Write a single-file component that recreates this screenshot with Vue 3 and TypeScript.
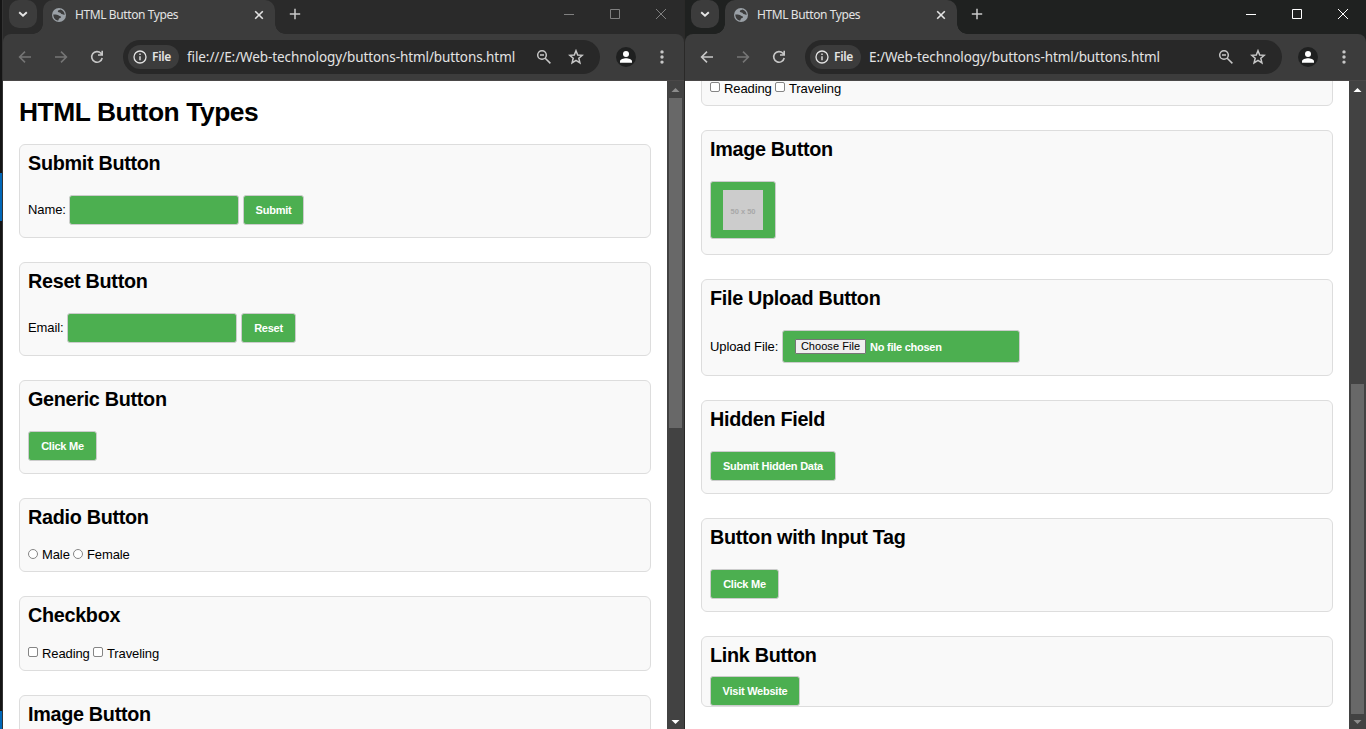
<script setup lang="ts">
interface Win {
  id: string
  url: string
  active: boolean
  scrolled: boolean
  cards: Card[]
}
interface Card {
  title: string
  kind: string
  label?: string
  button?: string
  options?: string[]
}

const checkbox: Card = { title: 'Checkbox', kind: 'checkbox', options: ['Reading', 'Traveling'] }
const image: Card = { title: 'Image Button', kind: 'image' }

const windows: Win[] = [
  {
    id: 'left',
    url: 'file:///E:/Web-technology/buttons-html/buttons.html',
    active: false,
    scrolled: false,
    cards: [
      { title: 'Submit Button', kind: 'field', label: 'Name:', button: 'Submit' },
      { title: 'Reset Button', kind: 'field', label: 'Email:', button: 'Reset' },
      { title: 'Generic Button', kind: 'button', button: 'Click Me' },
      { title: 'Radio Button', kind: 'radio', options: ['Male', 'Female'] },
      checkbox,
      image,
    ],
  },
  {
    id: 'right',
    url: 'E:/Web-technology/buttons-html/buttons.html',
    active: true,
    scrolled: true,
    cards: [
      checkbox,
      image,
      { title: 'File Upload Button', kind: 'file', label: 'Upload File:' },
      { title: 'Hidden Field', kind: 'button', button: 'Submit Hidden Data' },
      { title: 'Button with Input Tag', kind: 'button', button: 'Click Me' },
      { title: 'Link Button', kind: 'link', button: 'Visit Website' },
    ],
  },
]

const slug = (s: string) => s.split(' ')[0].toLowerCase()
</script>

<template>
  <div class="desktop">
    <div class="edge">
      <div class="edge-blue a"></div>
      <div class="edge-blue b"></div>
    </div>
    <template v-for="w in windows" :key="w.id">
      <section class="window" :class="[w.id, { active: w.active }]">
        <header class="strip">
          <div class="search-tabs">
            <svg width="28" height="28" viewBox="0 0 28 28"><path d="M10.2 12.2l3.8 3.6 3.8-3.6" fill="none" stroke="#e6e6e6" stroke-width="1.9" /></svg>
          </div>
          <div class="tab">
            <svg class="globe" width="14" height="14" viewBox="0 0 14 14">
              <circle cx="7" cy="7" r="7" fill="#9aa0a6" />
              <path d="M1.3 6.4C3 6.4 5.6 6.2 6.4 7.3c.8 1.1 1.8.8 2.4 1.2.7.6-.2 1.6-1.2 1.8-.9.2-.8 1.2-1.3 2.3C3.400 12.300 1.300 9.800 1.300 6.400z" fill="#3c3c3c" />
              <path d="M8.300 1.500C7.200 2.300 5.700 2.200 5.800 3.400c.1 1 1.600.7 2.500 1.300.8.500.8 1.500 1.900 1.500.8 0 1.300.5 2.400.8C12.700 4.200 10.900 2 8.300 1.500z" fill="#3c3c3c" />
            </svg>
            <span class="tab-title">HTML Button Types</span>
            <svg class="tab-close" width="10" height="10" viewBox="0 0 10 10"><path d="M1.200 1.200l7.600 7.600M8.800 1.200L1.200 8.800" stroke="#e3e3e3" stroke-width="1.600" /></svg>
          </div>
          <svg class="plus" width="12" height="12" viewBox="0 0 12 12"><path d="M6 .8v10.400M.8 6h10.400" stroke="#c9c9c9" stroke-width="1.500" /></svg>
          <div class="controls">
            <svg width="12" height="12" viewBox="0 0 12 12"><path d="M1 6.500h10" /></svg>
            <svg width="12" height="12" viewBox="0 0 12 12"><path d="M1.500 1.500h9v9h-9z" /></svg>
            <svg width="12" height="12" viewBox="0 0 12 12"><path d="M1 1l10 10M11 1L1 11" /></svg>
          </div>
        </header>
        <div class="toolbar">
          <svg class="nav back" width="14" height="14" viewBox="0 0 14 14"><path d="M13 7H1.800M7 1.600L1.600 7 7 12.400" /></svg>
          <svg class="nav" width="14" height="14" viewBox="0 0 14 14"><path d="M1 7h11.200M7 1.600L12.400 7 7 12.400" /></svg>
          <svg class="nav reload" width="14" height="14" viewBox="0 0 14 14"><path d="M12.200 8A5.300 5.300 0 1 1 10.900 3.300L12 4.500M12.200 .8V5H8" /></svg>
          <div class="omnibox">
            <div class="chip">
              <svg width="14" height="14" viewBox="0 0 14 14"><circle cx="7" cy="7" r="6" fill="none" stroke="#e3e3e3" stroke-width="1.300" /><path d="M7 6.200v4M7 3.600v1.500" stroke="#e3e3e3" stroke-width="1.400" /></svg>
              <span>File</span>
            </div>
            <span class="url">{{ w.url }}</span>
            <svg class="lens" width="16" height="16" viewBox="0 0 16 16"><circle cx="6" cy="6" r="4.300" /><path d="M9.200 9.200l5.200 5.200M4 6h4" /></svg>
            <svg class="star" width="16" height="16" viewBox="0 0 16 16"><path d="M8 1.700l1.700 4.300 4.600.3-3.500 3 1.100 4.500L8 11.300l-3.900 2.500 1.100-4.500-3.500-3 4.600-.3z" /></svg>
          </div>
          <svg class="avatar" width="20" height="20" viewBox="0 0 20 20"><circle cx="10" cy="10" r="10" fill="#1f2020" /><circle cx="10" cy="7" r="3" fill="#fff" /><path d="M4 15.800v-1.600c0-2 3.600-3 6-3s6 1 6 3v1.600z" fill="#fff" /></svg>
          <svg class="dots" width="4" height="14" viewBox="0 0 4 14"><circle cx="2" cy="1.900" r="1.700" /><circle cx="2" cy="7" r="1.700" /><circle cx="2" cy="12.100" r="1.700" /></svg>
        </div>
        <div class="view">
          <main class="page" :class="{ scrolled: w.scrolled }">
            <h1 v-if="!w.scrolled">HTML Button Types</h1>
            <article v-for="c in w.cards" :key="c.title" class="card" :class="c.kind">
              <h2 :class="slug(c.title)">{{ c.title }}</h2>
              <div v-if="c.kind === 'field'" class="row">
                <span class="label" :class="slug(c.button!)">{{ c.label }}</span>
                <span class="green input"></span>
                <span class="green btn" :class="slug(c.button!)">{{ c.button }}</span>
              </div>
              <div v-else-if="c.kind === 'button' || c.kind === 'link'" class="row">
                <span class="green btn" :class="slug(c.button!)">{{ c.button }}</span>
              </div>
              <div v-else-if="c.kind === 'image'" class="row">
                <span class="green picture"><span class="thumb">50 x 50</span></span>
              </div>
              <div v-else-if="c.kind === 'file'" class="row">
                <span class="label upload">{{ c.label }}</span>
                <span class="green file-input"><span class="choose">Choose File</span><span>No file chosen</span></span>
              </div>
              <div v-else class="row options">
                <template v-for="o in c.options" :key="o">
                  <span class="mark"></span>
                  <span class="option" :class="slug(o)">{{ o }}</span>
                </template>
              </div>
            </article>
          </main>
          <aside class="scrollbar">
            <svg width="17" height="17" viewBox="0 0 17 17"><path d="M8.500 7l4 4h-8z" :fill="w.scrolled ? '#fff' : '#8c8c8c'" /></svg>
            <div class="track"><div class="thumb-bar"></div></div>
            <svg width="17" height="15" viewBox="0 0 17 15"><path d="M4.500 6h8l-4 4z" :fill="w.scrolled ? '#8c8c8c' : '#fff'" /></svg>
          </aside>
        </div>
      </section>
      <div v-if="w.id === 'left'" class="seam"></div>
    </template>
  </div>
</template>

<style>
html, body { margin: 0; overflow: hidden; }
</style>

<style scoped>
* { box-sizing: border-box; }
svg { display: block; flex: none; }
.desktop { display: flex; width: 1366px; height: 729px; overflow: hidden; background: #fff; font-family: "Liberation Sans", Arial, sans-serif; }
.edge { width: 3px; height: 729px; background: #151515; border-right: 1px solid #333; flex: none; display: flex; flex-direction: column; }
.edge-blue { width: 2px; background: #0067b8; }
.edge-blue.a { margin-top: 173px; height: 48px; }
.edge-blue.b { margin-top: 490px; height: 18px; }
.window { width: 681px; height: 729px; display: flex; flex-direction: column; flex: none; background: #2a2a2a; }
.window.active { background: #1f2120; }
.seam { width: 1px; height: 729px; background: #2a2928; flex: none; }

.strip { height: 34px; display: flex; align-items: flex-start; flex: none; }
.search-tabs { width: 28px; height: 28px; margin-left: 6px; border-radius: 10px; background: #3c3c3c; }
.tab { position: relative; width: 232px; height: 34px; margin-left: 6px; padding: 0 11px 5px 9px; display: flex; align-items: center; background: #3c3c3c; border-radius: 10px 10px 0 0; }
.tab::before, .tab::after { content: ""; position: absolute; bottom: 0; width: 10px; height: 10px; }
.tab::before { left: -10px; background: radial-gradient(circle at 0 0, transparent 9.5px, #3c3c3c 10px); }
.tab::after { right: -10px; background: radial-gradient(circle at 100% 0, transparent 9.5px, #3c3c3c 10px); }
.tab-title { margin-left: 9px; font: 12px "Noto Sans", "Open Sans", sans-serif; letter-spacing: -0.4px; color: #e3e3e3; white-space: nowrap; flex: 1; }
.plus { margin: 8px 0 0 14px; }
.controls { display: flex; gap: 34px; margin: 8px 17px 0 auto; }
.controls path { fill: none; stroke: #808080; stroke-width: 1; }
.active .controls path { stroke: #fff; }

.toolbar { height: 47px; display: flex; align-items: center; flex: none; padding: 0 0 1px 15px; background: #3c3c3c; border-bottom: 1px solid #4a4848; border-radius: 8px 8px 0 0; }
.nav { margin-right: 22px; }
.nav path { fill: none; stroke: #757575; stroke-width: 1.6; }
.active .nav.back path, .nav.reload path { stroke: #c7c7c7; }
.nav.reload { margin-right: 19px; }
.omnibox { width: 477px; height: 34px; display: flex; align-items: center; padding: 0 16px 0 5px; background: #282828; border-radius: 17px; }
.chip { width: 51px; height: 24px; border-radius: 12px; background: #3c3c3c; display: flex; align-items: center; padding-left: 5px; flex: none; }
.chip span { margin-left: 5px; font: 600 12px "Noto Sans", "Open Sans", sans-serif; letter-spacing: -0.3px; color: #e3e3e3; }
.url { margin-left: 8px; font: 13.5px "Noto Sans", "Open Sans", sans-serif; letter-spacing: -0.09px; color: #e3e3e3; white-space: nowrap; flex: 1; }
.lens { margin-right: 16px; }
.lens circle, .lens path, .star path { fill: none; stroke: #c7c7c7; stroke-width: 1.5; }
.avatar { margin-left: 16px; }
.dots { margin-left: 24px; }
.dots circle { fill: #c7c7c7; }

.view { flex: 1; min-height: 0; display: flex; background: #fff; }
.page { width: 664px; padding: 16px 16px 0; overflow: hidden; height: 648px; }
h1 { margin: 0 0 17px; height: 30px; line-height: 30px; font-size: 26.4px; letter-spacing: -0.44px; font-weight: 700; color: #000; white-space: nowrap; }
.card { height: 94px; margin-bottom: 24px; padding: 8px; border: 1px solid #ddd; border-radius: 6px; background: #f9f9f9; }
.card.radio { height: 74px; }
.card.checkbox { height: 75px; }
.card.image { height: 125px; }
.card.file { height: 97px; }
.card.link { height: 71px; }
.page.scrolled { padding-top: 0; }
.scrolled .card:first-child { margin-top: -50px; }
h2 { margin: 0; height: 22px; line-height: 21px; font-size: 19.8px; letter-spacing: -0.3px; font-weight: 700; color: #000; white-space: nowrap; }
.row { display: flex; align-items: center; margin-top: 20px; height: 30px; font-size: 13px; letter-spacing: -0.1px; color: #000; white-space: nowrap; }
.label { width: 41px; padding-bottom: 1px; }
.label.reset { width: 39px; }
.label.upload { width: 72px; }
.green { display: flex; align-items: center; background: #4caf50; border: 1px solid #ccc; border-radius: 3px; color: #fff; font-size: 11px; letter-spacing: -0.25px; font-weight: 700; height: 30px; }
.input { width: 170px; margin-right: 4px; }
.btn { justify-content: center; width: 69px; }
.btn.submit { width: 61px; }
.btn.reset { width: 55px; }
.button .btn.submit { width: 126px; }
.btn.visit { width: 90px; }
.link .row { margin-top: 9px; }
.image .row { height: 58px; }
.picture { width: 66px; height: 58px; padding-left: 12px; }
.thumb { width: 40px; height: 40px; background: #ccc; color: #a8a8a8; font-size: 7.5px; letter-spacing: 0; display: flex; align-items: center; justify-content: center; padding-top: 2px; }
.file .row { height: 33px; }
.file-input { width: 238px; height: 33px; padding-left: 12px; }
.choose { width: 71px; height: 15px; line-height: 13px; margin-right: 4px; text-align: center; border: 1px solid #767676; background: #efefef; color: #000; font-size: 11px; letter-spacing: 0.05px; font-weight: 400; border-radius: 1px; }
.row.options { margin-top: 17px; height: 16px; }
.checkbox .row.options { margin-top: 18px; }
.mark { width: 10px; height: 10px; border: 1px solid #858585; border-radius: 2px; background: #fff; margin-right: 4px; }
.checkbox .mark { margin-bottom: 2px; }
.radio .mark { border-radius: 50%; }
.option { width: 51px; }
.option.male { width: 31px; }

.scrollbar { width: 17px; display: flex; flex-direction: column; background: #424242; flex: none; }
.track { flex: 1; padding: 0 2px; }
.thumb-bar { height: 330px; background: #686868; }
.right .thumb-bar { margin-top: 286px; height: 330px; }
</style>
